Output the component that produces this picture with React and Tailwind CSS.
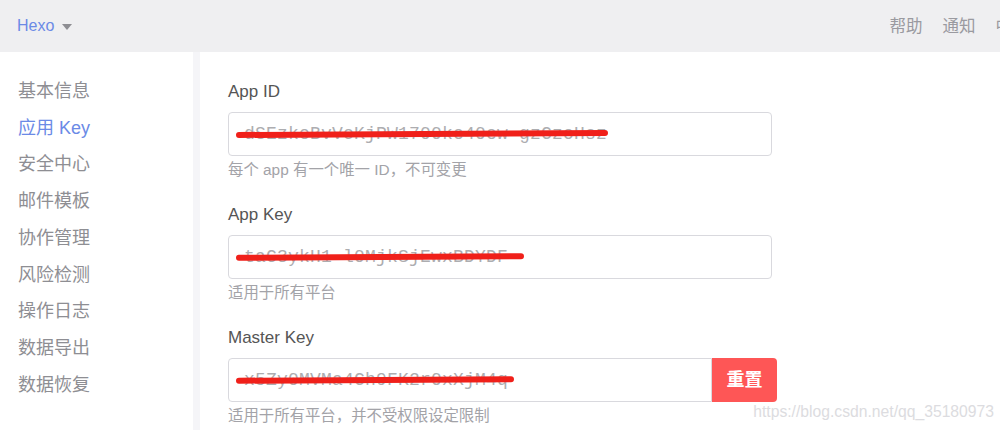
const NAV = ['基本信息', '应用 Key', '安全中心', '邮件模板', '协作管理', '风险检测', '操作日志', '数据导出', '数据恢复'];

const FONT = { fontFamily: '"Helvetica Neue", "Liberation Sans", "Noto Sans CJK SC", sans-serif' };

const KeyField = ({ label, value, lineWidth, help, reset }) => (
  <div className="mb-[23px]">
    <div className="text-[17px] text-[#555] leading-[24px] mb-[8px]">{label}</div>
    <div className="flex">
      <div
        className={`relative h-[44px] flex items-center pl-[15px] border border-[#d9d9de] bg-white ${reset ? 'w-[484px] rounded-l-[4px]' : 'w-[544px] rounded-[4px]'}`}
      >
        <span className="font-['Liberation_Mono',monospace] text-[18px] text-[#adadb0] tracking-[0.2px]">{value}</span>
        <span
          className="absolute left-[7px] top-[18px] h-[6px] bg-[#f0201a] rounded-full -rotate-[0.3deg]"
          style={{ width: lineWidth }}
        />
      </div>
      {reset && (
        <button className="w-[65px] h-[44px] bg-[#fe5656] text-white text-[18px] font-bold rounded-r-[4px]">重置</button>
      )}
    </div>
    <div className="text-[15.4px] text-[#a3a3a8] leading-[20px] mt-[4px]">{help}</div>
  </div>
);

export default function App() {
  return (
    <div className="w-[1000px] h-[430px] overflow-hidden bg-white relative" style={FONT}>
      <header className="h-[52px] bg-[#efeff1] flex items-center justify-between pl-[17px]">
        <div className="flex items-center gap-[8px] text-[16px] text-[#6b8ae6]">
          Hexo
          <svg width="10" height="6" viewBox="0 0 10 6" className="mt-[2px]">
            <polygon points="0,0 10,0 5,6" fill="#8e8e93" />
          </svg>
        </div>
        <div className="flex items-center gap-[20px] text-[16.5px] text-[#9a9aa0] mr-[-12px]">
          <span>帮助</span>
          <span>通知</span>
          <span>中</span>
        </div>
      </header>
      <div className="flex h-[378px]">
        <aside className="w-[193px] pt-[21px] pl-[18px]">
          {NAV.map(item => (
            <div
              key={item}
              className={`text-[18px] leading-[36.7px] ${item === '应用 Key' ? 'text-[#6b8ae6]' : 'text-[#8e8e93]'}`}
            >
              {item}
            </div>
          ))}
        </aside>
        <div className="w-[7px] bg-[#f5f5f8]" />
        <main className="flex-1 pl-[28px] pt-[28px]">
          <KeyField label="App ID" value="dSEzkeBvVcKjPW1700ke40ew-gzCzoHsz" lineWidth={372} help="每个 app 有一个唯一 ID，不可变更" />
          <KeyField label="App Key" value="taC3ykH1-l0MjkSjEwxBDYDF" lineWidth={288} help="适用于所有平台" />
          <KeyField label="Master Key" value="x5Zy0MVMa4Ch9FK2r0xXjM4q" lineWidth={278} help="适用于所有平台，并不受权限设定限制" reset />
        </main>
      </div>
      <div className="absolute right-[6px] bottom-[6px] text-[15.7px] text-[#dcdce0]" style={{ fontFamily: '"Liberation Sans", sans-serif' }}>
        https://blog.csdn.net/qq_35180973
      </div>
    </div>
  );
}
